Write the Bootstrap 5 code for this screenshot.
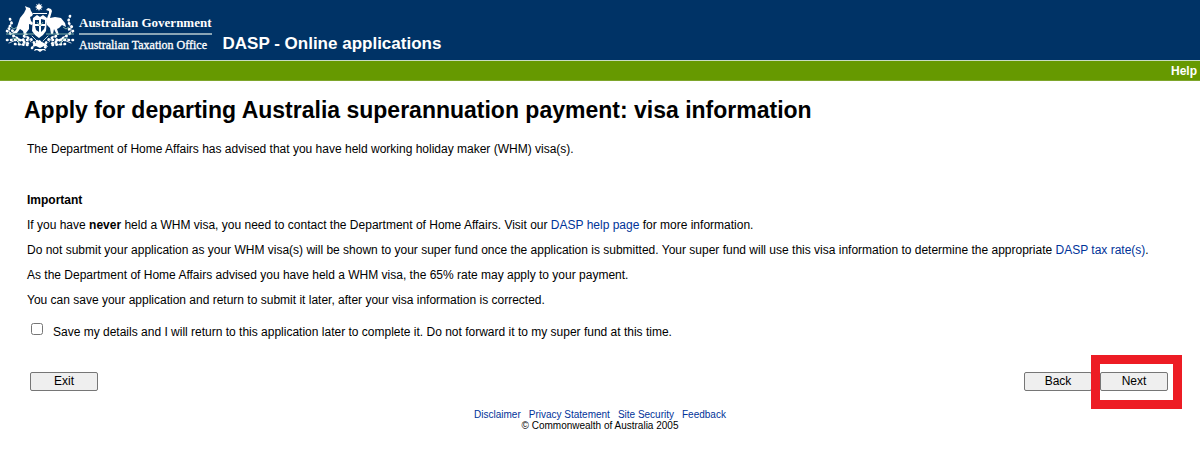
<!DOCTYPE html>
<html lang="en">
<head>
<meta charset="utf-8">
<meta name="viewport" content="width=device-width, initial-scale=1">
<title>DASP - Online applications</title>
<link rel="stylesheet" href="https://cdn.jsdelivr.net/npm/bootstrap@5.3.0/dist/css/bootstrap.min.css">
<style>
body{font:12px/16px "Liberation Sans",Arial,sans-serif;color:#000;background:#fff}
a{color:#039;text-decoration:none}
a:hover{text-decoration:underline}
.masthead{background:#036;color:#fff;height:60px;padding-left:4px}
.crest{width:72px;height:54px}
.wordmark{font:bold 13px/16px "Liberation Serif","Times New Roman",serif;margin:15px 0 0 3px}
.wordmark .office{border-top:2px solid #8aa5b5;margin-top:2px;padding-top:2px;font-size:12px;font-weight:normal;-webkit-text-stroke:.3px #fff}
.app-name{font-size:17px;line-height:20px;font-weight:bold;margin:34px 0 0 11px}
.menu-strip{background:#690;border-top:1px solid #c8dcc0;border-bottom:1px solid #7ea62b;height:21px;padding-right:3px}
.menu-strip a{color:#fff;font:bold 12px/20px "Liberation Sans",Arial,sans-serif}
.page-body{padding:15px 32px 0 24px}
h1{font-size:23px;line-height:28px;font-weight:bold;margin:0 0 17px}
.copy{padding-left:3px}
.copy p{line-height:17px;margin:0 0 8px}
.copy .lead-in{margin-bottom:34px}
.save-row{padding:6px 0 0 4px}
.save-row input{width:12px;height:12px;margin:0 10px 6px 0}
.actions{padding:31px 0 0 6px}
.action-btn{width:68px;height:19px;padding:0;font-size:12px;line-height:17px;color:#000;background:#efefef;border:1px solid #767676;border-radius:2px}
.highlighted{position:relative}
.highlighted::after{content:"";position:absolute;inset:-17px -14px -18px -9px;border:9px solid #ed1c24;pointer-events:none}
footer{font-size:10px;line-height:11px;padding-top:18px}
</style>
</head>
<body>
<header>
<div class="masthead d-flex align-items-start">
<svg class="crest flex-shrink-0" viewBox="0 0 72 54" fill="#fff" role="img" aria-label="Commonwealth Coat of Arms">
<path d="M35 3l1 2 2-1-1 2 2 1-2 1 1 2-2-1-1 2-1-2-2 1 1-2-2-1 2-1-1-2 2 1z"/>
<path d="M29 13h14v1H29z"/>
<path d="M26 8l1 3 2 3-1 2-2 1 1 4 2 2-1 2-3-1 0 5-3 4 2 2h-4l-1-4-3-2-3 4-6 1 5-4 2-6 2-6 4-5 2-4-1-3 2 1z"/>
<path d="M44 8l3 1 1 2-2 7 5-1 6 1 4 5 1 4-4-2-3 3-2 1 2 6h-2l-3-6-1 5h-2l-1-6-3-3-1-4 3-8 0-2-3-1z"/>
<path fill-rule="evenodd" d="M29 18l4-3 3 2 3-2 4 3-1 13-3 4-4 3-4-3-3-4zm2 2v4h4v-4zm6-1v5h4v-4zm-6 7l1 4 3 2v-6zm6 0v6l3-3 1-3z"/>
<path d="M30 44l6-3 6 3 2 3-4-1-4 2-4-2-4 1zM31 49h10l1 2-3-1-3 2-3-2-3 1z"/>
<g fill="none" stroke="#fff" stroke-linecap="round">
<path stroke-width=".8" d="M6 33c-3-4 1-7 1-11M9 35l8 5 6-4 4 6M5 43l7-3 5 5 7-3M66 33c3-4-1-7-1-11M63 35l-8 5-6-4-4 6M67 43l-7-3-5 5-7-3M28 36l5 5M44 36l-5 5"/>
<path stroke-dasharray=".5 3.5" stroke-width="2.6" d="M6 19l2 5-4 4 5 3M3 31l5 4 8 5 9 4M3 40h22M11 44l14 1M20 36l7 3 4 5M66 16l-2 6 4 5-5 4M69 31l-5 4-8 5-9 4M69 40H47M61 44l-14 1M52 36l-7 3-4 5M28 48l6-8 8 8"/>
</g>
<path fill="none" stroke="#8fbfb0" stroke-width=".9" d="M2 34h28M42 34h28M7 27l3 2 3-2M8 38l5 1 3 5M65 27l-3 2-3-2M64 38l-5 1-3 5M33 22l3 4 3-4"/>
</svg>
<div class="wordmark text-nowrap">
<div>Australian Government</div>
<div class="office">Australian Taxation Office</div>
</div>
<div class="app-name">DASP - Online applications</div>
</div>
<nav class="menu-strip d-flex justify-content-end" aria-label="Help"><a href="#help">Help</a></nav>
</header>
<main class="page-body">
<h1>Apply for departing Australia superannuation payment: visa information</h1>
<form>
<div class="copy">
<p class="lead-in">The Department of Home Affairs has advised that you have held working holiday maker (WHM) visa(s).</p>
<p><b>Important</b></p>
<p>If you have <b>never</b> held a WHM visa, you need to contact the Department of Home Affairs. Visit our <a href="#dasp-help">DASP help page</a> for more information.</p>
<p>Do not submit your application as your WHM visa(s) will be shown to your super fund once the application is submitted. Your super fund will use this visa information to determine the appropriate <a href="#tax-rates">DASP tax rate(s)</a>.</p>
<p>As the Department of Home Affairs advised you have held a WHM visa, the 65% rate may apply to your payment.</p>
<p>You can save your application and return to submit it later, after your visa information is corrected.</p>
<div class="save-row d-flex align-items-center">
<input type="checkbox" id="save"><label for="save">Save my details and I will return to this application later to complete it. Do not forward it to my super fund at this time.</label>
</div>
</div>
<div class="actions d-flex">
<button type="button" class="action-btn me-auto">Exit</button>
<button type="button" class="action-btn">Back</button>
<div class="highlighted d-flex ms-2"><button type="submit" class="action-btn">Next</button></div>
</div>
</form>
</main>
<footer class="text-center">
<div class="d-flex justify-content-center gap-2"><a href="#disclaimer">Disclaimer</a><a href="#privacy">Privacy Statement</a><a href="#security">Site Security</a><a href="#feedback">Feedback</a></div>
<div>© Commonwealth of Australia 2005</div>
</footer>
<script src="https://cdn.jsdelivr.net/npm/bootstrap@5.3.0/dist/js/bootstrap.bundle.min.js"></script>
</body>
</html>
